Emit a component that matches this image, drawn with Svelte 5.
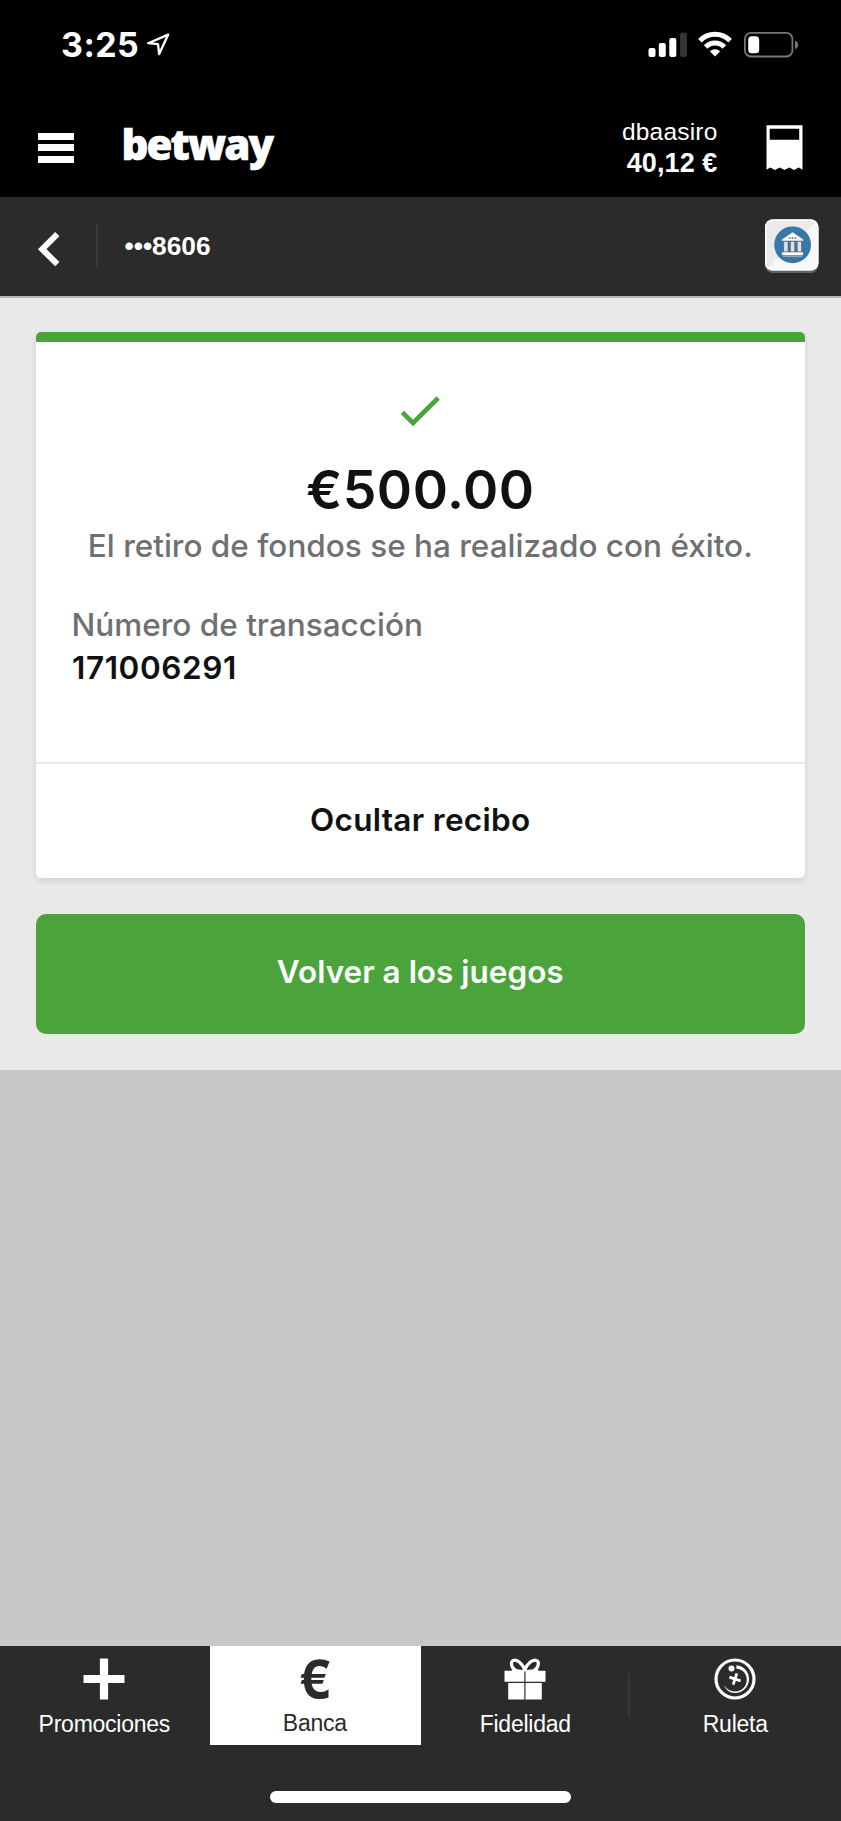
<script>
  const tabs = [
    { id: 'promo', label: 'Promociones' },
    { id: 'banking', label: 'Banca', active: true },
    { id: 'gift', label: 'Fidelidad' },
    { id: 'roulette', label: 'Ruleta' }
  ];
</script>

<div class="screen">
  <div class="status">
    <span class="time">3:25</span>
    <svg class="loc" width="26" height="26" viewBox="0 0 26 26">
      <path d="M22.2 3.6 L2.2 12.2 L12 13.2 L13.2 23 Z" fill="none" stroke="#fff" stroke-width="2.3" stroke-linejoin="round" />
    </svg>
    <svg class="radio" width="160" height="30" viewBox="0 0 160 30">
      <rect x="0.5" y="18" width="7" height="9" rx="2" fill="#fff" />
      <rect x="10.8" y="13" width="7" height="14" rx="2" fill="#fff" />
      <rect x="21.3" y="8" width="7" height="19" rx="2" fill="#fff" />
      <rect x="32" y="2.6" width="7" height="24.4" rx="2" fill="#333" />
      <g fill="none" stroke="#fff" stroke-width="5">
        <path d="M51.9 10.7 A21 21 0 0 1 82.1 10.7" />
        <path d="M57.7 17 A12.6 12.6 0 0 1 76.3 17" />
      </g>
      <path d="M67 26.4 L61.8 21.3 A7.6 7.6 0 0 1 72.2 21.3 Z" fill="#fff" />
      <rect x="96.9" y="2.9" width="47.5" height="23.6" rx="6" fill="none" stroke="#777" stroke-width="1.8" />
      <rect x="100.2" y="6.3" width="11" height="17" rx="3.6" fill="#fff" />
      <path d="M147 10.4 Q150.2 11.6 150.2 14.8 Q150.2 18 147 19.2 Z" fill="#777" />
    </svg>
  </div>

  <header class="top">
    <div class="menu"><i></i><i></i><i></i></div>
    <div class="logo">betway</div>
    <div class="account">
      <span class="user">dbaasiro</span>
      <span class="balance">40,12 €</span>
    </div>
    <svg class="receipt" width="37" height="46" viewBox="0 0 37 46">
      <path fill="#fff" fill-rule="evenodd" d="M0.5 0.2 H36.5 V44.8 L32.9 42.6 L28 45 L23.4 42.6 L18.5 45 L13.7 42.6 L9 45 L4.2 42.6 L0.5 44.8 Z M3.7 3.7 V14.8 H33.2 V3.7 Z" />
    </svg>
  </header>

  <div class="subbar">
    <svg class="back" width="24" height="36" viewBox="0 0 24 36">
      <path d="M20.3 2.2 L5.2 17.2 L20.3 32.2" fill="none" stroke="#fff" stroke-width="6" />
    </svg>
    <span class="sep"></span>
    <span class="acct">•••8606</span>
    <svg class="bank" width="56" height="56" viewBox="0 0 56 56">
      <defs>
        <clipPath id="tile"><rect x="1" y="1.5" width="53.5" height="51" rx="7.5" /></clipPath>
      </defs>
      <rect x="1" y="4" width="53.5" height="51" rx="7.5" fill="#5b616b" />
      <rect x="1" y="1.5" width="53.5" height="51" rx="7.5" fill="#f8f8f9" />
      <path d="M0 0 H56 L0 53 Z" fill="#ece9ea" clip-path="url(#tile)" />
      <rect x="1.8" y="2.3" width="51.9" height="49.4" rx="6.8" fill="none" stroke="#fff" stroke-width="1.4" />
      <circle cx="28.6" cy="26.8" r="18.4" fill="#3579a9" />
      <g fill="#fff" stroke="#5f6670" stroke-width=".6">
        <path d="M28.6 14 L39.6 21.5 V23 H17.6 V21.5 Z" />
        <rect x="19.8" y="23.4" width="4.2" height="10.6" fill="#e2e2e2" />
        <rect x="26.5" y="23.4" width="4.2" height="10.6" fill="#e2e2e2" />
        <rect x="33.2" y="23.4" width="4.2" height="10.6" fill="#e2e2e2" />
        <rect x="17.8" y="34" width="21.4" height="3.4" />
        <rect x="18.8" y="37.4" width="19.4" height="1.4" />
      </g>
      <path d="M24.8 20 H32.4" stroke="#3f5f96" stroke-width="1.6" stroke-dasharray="1.6 1.2" />
    </svg>
  </div>

  <main class="content">
    <section class="card">
      <div class="body">
        <svg class="check" width="42" height="32" viewBox="0 0 42 32">
          <path d="M3.4 17.4 L14 28 L39.2 3" fill="none" stroke="#4aa43b" stroke-width="4.6" />
        </svg>
        <div class="amount">€500.00</div>
        <div class="message">El retiro de fondos se ha realizado con éxito.</div>
        <div class="label">Número de transacción</div>
        <div class="number">171006291</div>
      </div>
      <div class="hide">Ocultar recibo</div>
    </section>
    <button class="cta">Volver a los juegos</button>
  </main>

  <nav class="tabs">
    {#each tabs as tab}
      <div class="tab {tab.id}" class:active={tab.active}>
        <svg width="44" height="44" viewBox="0 0 44 44">
          {#if tab.id === 'promo'}
            <path d="M17.9 1.5 H26.1 V17.9 H42.5 V26.1 H26.1 V42.5 H17.9 V26.1 H1.5 V17.9 H17.9 Z" fill="#fff" />
          {:else if tab.id === 'banking'}
            <path d="M36.6 4.6 Q31.5 2.2 26.5 2.2 C15 2.2 10.8 11 10.8 22 C10.8 34 15 42 26 42 Q32 42 35.5 40.4 V32.4 Q31.5 35 27.5 35 C21 35 18.3 30 18.3 22 C18.3 13.5 21 9 26.8 9 Q30.5 9 33.6 11.7 Z" fill="#2b2b2b" />
            <path d="M8.9 17 H32.8 L31.4 20.8 H7.5 Z M8.9 23 H30.8 L29.4 26.8 H7.5 Z" fill="#2b2b2b" />
          {:else if tab.id === 'gift'}
            <path d="M1.5 13.7 H42.5 V24.7 H1.5 Z M5.2 26 H38.8 V42.5 H5.2 Z" fill="#fff" />
            <path d="M21.9 13.5 V42.5" stroke="#2b2b2b" stroke-width="1.2" />
            <path d="M21.8 13.2 C19.5 6.5 14 2 10.4 3.4 C7 4.9 8.2 11 13 13.6 M21.8 13.2 C24.1 6.5 29.6 2 33.4 3.4 C36.8 4.9 35.6 11 30.8 13.6" fill="none" stroke="#fff" stroke-width="3.2" />
            <path d="M10 11.8 L22 13.2 L34 11.8 L36 14.5 H8 Z" fill="#fff" />
          {:else}
            <circle cx="22" cy="22" r="19" fill="none" stroke="#fff" stroke-width="3.2" />
            <circle cx="18.5" cy="11.4" r="3" fill="#fff" />
            <path d="M23.4 8.2 C31.5 9 36 15.5 36 22 C36 30 29.5 36 22 36 C17 36 13 33 11 28.5 C14 32.5 17.5 34.4 22 34.4 C29 34.4 33.8 29.5 33.8 22.5 C33.8 17 29.5 12 23.4 11.8 Z" fill="#fff" />
            <path d="M23.8 16.4 L20.2 27.6 M16.4 20.2 L27.6 23.8" stroke="#fff" stroke-width="2.8" />
          {/if}
        </svg>
        <span>{tab.label}</span>
      </div>
    {/each}
    <div class="home"></div>
  </nav>
</div>

<style>
  :global(body) { margin: 0; background: #c7c7c7; }
  .screen { width: 841px; height: 1821px; display: flex; flex-direction: column; background: #c7c7c7; overflow: hidden; font-family: Inter, sans-serif; }
  .screen * { box-sizing: border-box; }
  svg { display: block; flex: none; }

  .status { height: 90px; flex: none; background: #000; color: #fff; display: flex; align-items: flex-start; padding: 30px 33px 0 61px; }
  .time { font-size: 34px; font-weight: 700; line-height: 30px; letter-spacing: .43px; width: 85px; white-space: nowrap; }
  .loc { margin-top: 1px; }
  .radio { margin-left: auto; }

  .top { height: 107px; flex: none; background: #000; color: #fff; display: flex; align-items: flex-start; }
  .menu { margin: 43px 0 0 38px; width: 36px; display: flex; flex-direction: column; gap: 4.6px; }
  .menu i { height: 6.8px; background: #fff; }
  .logo { margin: 24px 0 0 47.5px; font: 800 42px/60px "Open Sans", sans-serif; letter-spacing: -1.94px; -webkit-text-stroke: .6px #fff; }
  .account { margin-left: auto; margin-right: 48px; padding-top: 28px; display: flex; flex-direction: column; align-items: flex-end; font-family: "Liberation Sans", sans-serif; white-space: nowrap; }
  .user { font-size: 24.5px; line-height: 30px; letter-spacing: .2px; margin-top: -1px; }
  .balance { font-size: 27px; font-weight: 700; line-height: 32px; letter-spacing: .1px; }
  .receipt { margin: 35px 38.5px 0 0; }

  .subbar { height: 101px; flex: none; background: #2b2b2b; border-bottom: 2px solid #b8b8b8; display: flex; align-items: flex-start; }
  .back { margin: 35px 0 0 37px; }
  .sep { margin: 27px 0 0 35px; width: 2px; height: 44px; background: #383838; }
  .acct { margin: 34px 0 0 26.5px; color: #fff; font: 700 26.3px/30px "Liberation Sans", sans-serif; }
  .bank { margin: 21px 21.5px 0 auto; }

  .content { height: 771.5px; flex: none; background: #e9e9e9; padding: 34px 36px 0 35.5px; display: flex; flex-direction: column; }
  .card { background: #fff; border-top: 10px solid #4aa43b; border-radius: 5px; box-shadow: 0 3px 6px rgba(0, 0, 0, .1); height: 546px; display: flex; flex-direction: column; }
  .body { height: 419.5px; padding: 53px 37.5px 0; display: flex; flex-direction: column; white-space: nowrap; }
  .check { align-self: center; }
  .amount { margin-top: 32.5px; font-size: 53.5px; font-weight: 600; line-height: 60px; letter-spacing: .5px; color: #101112; text-align: center; }
  .message { margin-top: 6px; font-size: 31.5px; font-weight: 500; line-height: 40px; letter-spacing: 0; color: #6f7071; text-align: center; }
  .label { margin: 37px 0 0 -1.5px; font-size: 31.5px; font-weight: 500; line-height: 43px; letter-spacing: 0; color: #6f7071; }
  .number { margin-left: -1px; font-size: 31.5px; font-weight: 600; line-height: 43px; letter-spacing: .6px; color: #101112; }
  .hide { flex: 1; border-top: 2px solid #e8e8e8; display: flex; justify-content: center; align-items: center; font-size: 31.5px; font-weight: 600; letter-spacing: .3px; color: #101112; padding-bottom: 2px; }
  .cta { margin-top: 36px; height: 120px; border: 0; border-radius: 10px; background: #4aa43b; color: #fff; font: 600 31.5px/40px Inter, sans-serif; padding: 0 0 4px; }

  .tabs { margin-top: auto; height: 175.5px; flex: none; background: #2b2b2b; display: grid; grid-template-columns: 209.7px 211.3px 209.5px 210.5px; grid-template-rows: 99px 1fr; }
  .tab { display: flex; flex-direction: column; align-items: center; padding: 11.5px 1px 0 0; color: #fff; font: 400 23px/30px "Liberation Sans", sans-serif; letter-spacing: -.25px; }
  .tab span { margin-top: 7.5px; }
  .tab.active { background: #fff; color: #2b2b2b; }
  .tab.active span { margin-top: 6.5px; }
  .tab.gift { background: linear-gradient(#383838, #383838) right 0 top 27px / 2px 44px no-repeat; }
  .home { grid-column: 1 / -1; justify-self: center; width: 301px; height: 12px; border-radius: 6px; background: #fff; margin-top: 46.5px; }
</style>
